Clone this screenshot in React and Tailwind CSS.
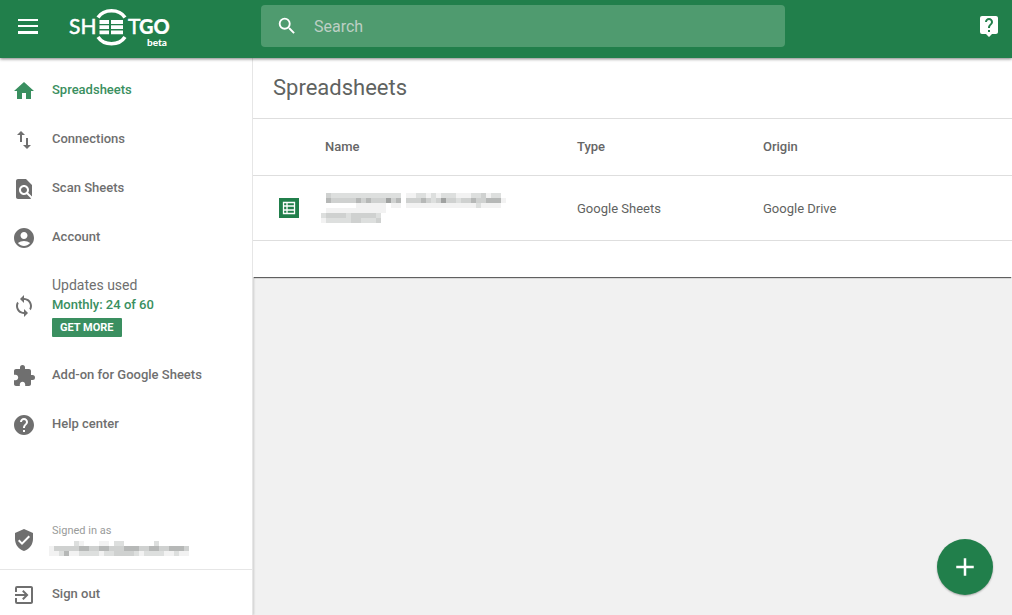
import { MdSearch, MdHome, MdImportExport, MdFindInPage, MdAccountCircle, MdLoop, MdExtension, MdHelp, MdVerifiedUser, MdExitToApp, MdLiveHelp, MdAdd } from "react-icons/md";

const shades = ["", "#f2f2f2", "#dddfde", "#cfd1d0", "#b6b8b7", "#a0a2a1"];

function Redacted({ rows, label, className }) {
  const width = Math.max(...rows.map((r) => r.length)) * 5;
  return (
    <svg role="img" aria-label={label} width={width} height={rows.length * 5} className={className} shapeRendering="crispEdges">
      {rows.flatMap((row, y) =>
        [...row].map((c, x) =>
          Number(c) ? <rect key={x + "-" + y} x={x * 5} y={y * 5} width="5" height="5" fill={shades[Number(c)]} /> : null
        )
      )}
    </svg>
  );
}

const fileRows = [
  "03222222222222220112212122211122312200",
  "04333334343335340333432353323343344410",
  "00000001111110110111111111111112111100",
  "01111111111110000000000000000000000000",
  "23333233333200000000000000000000000000",
  "12222233222300000000000000000000000000",
];

const emailRows = [
  "0000021000110220000002000000",
  "1333334433443334443344334443",
  "1124112222122333321222211211",
];

function Logo() {
  return (
    <svg role="img" aria-label="Sheetgo beta" width="104" height="44" viewBox="0 0 104 44" fill="#fff" fontFamily="Lato, sans-serif">
      <text x="1" y="26" fontSize="21" stroke="#fff" strokeWidth="0.500">SH</text>
      <text x="60" y="26" fontSize="21" stroke="#fff" strokeWidth="0.500">T</text>
      <text x="71" y="26" fontSize="20" fontWeight="900" stroke="#fff" strokeWidth="0.200">GO</text>
      <path d="M30 9.500C36 .5 51 .5 57 9.500M30 29C36 38 51 38 57 29" fill="none" stroke="#fff" strokeWidth="3.600" />
      <path d="M31.500 14h9.500M43 14h12M31.500 19.200h9.500M43 19.200h12M31.500 24.400h9.500M43 24.400h12" stroke="#fff" strokeWidth="3.800" />
      <text x="79" y="38" fontSize="10" fontWeight="900">beta</text>
    </svg>
  );
}

function MenuIcon() {
  return (
    <svg aria-hidden="true" width="20" height="15" viewBox="0 0 20 15" fill="currentColor">
      <path d="M0 0h20v2H0zM0 6h20v2H0zM0 12h20v3H0z" />
    </svg>
  );
}

function SheetIcon() {
  return (
    <svg aria-hidden="true" width="20" height="20" viewBox="0 0 20 20">
      <path d="M0 0h20v20H0z" fill="#217f4b" />
      <path d="M4.500 4.500h11v11h-11zM8 4v12M4 8h12M4 12h12" fill="none" stroke="#fff" strokeWidth="1.300" />
    </svg>
  );
}

function NavItem({ icon: Icon, label, active }) {
  return (
    <a href="#" aria-current={active ? "page" : undefined} className={"flex h-[49px] items-center gap-4 px-3 text-[13px] font-medium " + (active ? "text-[#3a8f60]" : "text-[#6f6f6f]")}>
      <Icon size={24} aria-hidden="true" className="shrink-0" />
      <span className="pb-px">{label}</span>
    </a>
  );
}

export default function App() {
  return (
    <div className="flex min-h-screen flex-col bg-[#f1f1f1] font-['Roboto',sans-serif] text-[#5f6361]">
      <header className="relative z-10 flex h-[58px] items-center bg-[#217f4b] pr-[11px] pb-1.5 text-white shadow-[0_1px_3px_rgba(0,0,0,0.5)]">
        <button type="button" aria-label="Menu" className="ml-[13px] p-[5px]">
          <MenuIcon />
        </button>
        <a href="#" className="ml-[25px] pt-2">
          <Logo />
        </a>
        <label className="ml-[89px] flex h-[42px] w-[524px] items-center gap-4 rounded-sm bg-[#4f9b6f] px-[15px]">
          <MdSearch size={22} aria-hidden="true" className="shrink-0" />
          <input type="search" aria-label="Search" placeholder="Search" className="min-w-0 grow bg-transparent pt-px text-base outline-none placeholder:text-[#bdcfc4]" />
        </label>
        <button type="button" aria-label="Live help" className="ml-auto">
          <MdLiveHelp size={24} />
        </button>
      </header>

      <div className="flex grow">
        <aside className="flex w-[253px] shrink-0 flex-col border-r border-[#e6e6e6] bg-white shadow-[1px_0_2px_rgba(0,0,0,0.15)]">
          <nav className="pt-2">
            <NavItem icon={MdHome} label="Spreadsheets" active />
            <NavItem icon={MdImportExport} label="Connections" />
            <NavItem icon={MdFindInPage} label="Scan Sheets" />
            <NavItem icon={MdAccountCircle} label="Account" />
            <div className="flex items-center gap-4 px-3 pt-[13px] pb-[14px] font-medium text-[#6f6f6f]">
              <MdLoop size={24} aria-hidden="true" className="shrink-0" />
              <div className="flex flex-col items-start">
                <p className="text-sm leading-5 font-normal">Updates used</p>
                <p className="text-[13px] leading-5 text-[#3a8f60]">Monthly: 24 of 60</p>
                <button type="button" className="mt-[3px] h-[19px] rounded-[1px] bg-[#3a8f60] px-2 pt-px text-[11px] font-bold text-white">GET MORE</button>
              </div>
            </div>
            <NavItem icon={MdExtension} label="Add-on for Google Sheets" />
            <NavItem icon={MdHelp} label="Help center" />
          </nav>
          <div className="mt-auto">
            <div className="flex items-center gap-4 px-3 pb-[13px]">
              <MdVerifiedUser size={24} aria-hidden="true" className="shrink-0 text-[#6f6f6f]" />
              <div>
                <p className="text-[11px] leading-4 text-[#999b9a]">Signed in as</p>
                <Redacted rows={emailRows} label="Hidden email address" className="mt-0.5 -ml-[3px]" />
              </div>
            </div>
            <div className="h-[46px] border-t border-[#e6e6e6]">
              <NavItem icon={MdExitToApp} label="Sign out" />
            </div>
          </div>
        </aside>

        <main className="min-w-0 grow">
          <section className="bg-white pb-9 shadow-[0_2px_1px_-1px_rgba(0,0,0,0.6)]">
            <h1 className="flex h-[60px] items-center pb-0.5 pl-5 text-[22px]">Spreadsheets</h1>
            <table className="w-full table-fixed border-collapse text-left text-[13px]">
              <thead>
                <tr className="h-[57px] border-y border-[#dedede] text-[#666]">
                  <td className="w-[72px]" />
                  <th className="w-[252px] font-medium">Name</th>
                  <th className="w-[186px] font-medium">Type</th>
                  <th className="font-medium">Origin</th>
                </tr>
              </thead>
              <tbody>
                <tr className="h-[65px] border-b border-[#dedede]">
                  <td className="pl-[26px]"><SheetIcon /></td>
                  <td><Redacted rows={fileRows} label="Hidden file name" className="-ml-1" /></td>
                  <td className="pt-0.5">Google Sheets</td>
                  <td className="pt-0.5">Google Drive</td>
                </tr>
              </tbody>
            </table>
          </section>
        </main>
      </div>

      <button type="button" aria-label="Add" className="fixed right-[19px] bottom-5 flex size-14 items-center justify-center rounded-full bg-[#217f4b] text-white shadow-[0_1px_2px_rgba(0,0,0,0.3)]">
        <MdAdd size={30} />
      </button>
    </div>
  );
}
